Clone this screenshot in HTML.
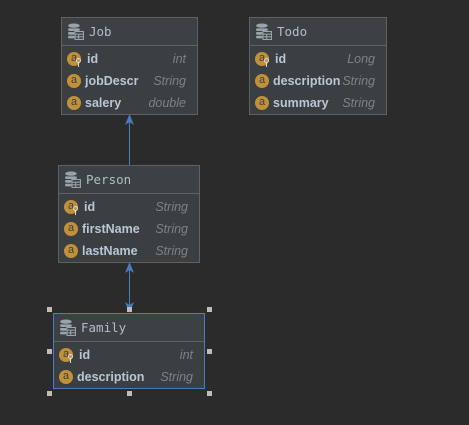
<!DOCTYPE html>
<html><head><style>
body{margin:0;width:469px;height:425px;background:#2b2b2b;position:relative;overflow:hidden;font-family:"Liberation Sans",sans-serif}
.b{position:absolute;background:#3c3f41;border:1px solid #5f6263;box-sizing:border-box}
.h{height:28px;border-bottom:1px solid #5f6263;background:#3e4143;display:flex;align-items:center;padding-left:5px;box-sizing:border-box}
.h span{font-family:"DejaVu Sans Mono","Liberation Mono",monospace;font-size:12.5px;color:#b0bccb;margin-left:5px}
.rows{padding-top:2px}
.r{height:22px;display:flex;align-items:center;padding:0 11px 0 5px;position:relative}
.c{display:block;width:14px;min-width:14px;height:14px;border-radius:50%;background:#c0913a;color:#3c3f41;font-size:11px;line-height:13px;text-align:center;flex:none}
.k{position:absolute;left:14px;top:10px;width:5px;height:5px;border:1.5px solid #d9dee4;border-radius:50%;box-sizing:border-box}
.k:after{content:"";position:absolute;left:0.5px;top:3px;width:1.5px;height:5px;background:#d9dee4}
.n{font-weight:bold;font-size:12.5px;color:#b9c6d6;margin-left:4px}
.key .n{margin-left:6px}
.t{margin-left:auto;font-style:italic;font-size:12.5px;color:#7f8285}
.hd{position:absolute;width:5px;height:5px;background:#bdbdbd}
</style></head><body>
<svg width="469" height="425" style="position:absolute;left:0;top:0">
<g stroke="#4a7cc0" stroke-width="1" fill="#4a7cc0">
<line x1="129.5" y1="118" x2="129.5" y2="165"/>
<path d="M129.5 114 L125 125 L129.5 122 L134 125Z" stroke="none"/>
<line x1="129.5" y1="266" x2="129.5" y2="310"/>
<path d="M129.5 262 L125 273 L129.5 270 L134 273Z" stroke="none"/>
<path d="M129.5 313 L125 302 L129.5 305 L134 302Z" stroke="none"/>
</g></svg>
<svg width="0" height="0" style="position:absolute"><defs><symbol id="tb" viewBox="0 0 16 16">
<ellipse cx="6.5" cy="2.5" rx="5.5" ry="2" fill="#9aa3ab"/><rect x="1" y="5" width="11" height="2.5" rx="1" fill="#9aa3ab"/><rect x="1" y="8.5" width="6" height="2.5" rx="1" fill="#9aa3ab"/><rect x="1" y="12" width="6" height="2.5" rx="1" fill="#9aa3ab"/>
<rect x="7.5" y="8" width="8" height="7.5" fill="none" stroke="#9aa3ab"/><line x1="7.5" y1="10.5" x2="15.5" y2="10.5" stroke="#9aa3ab"/><line x1="7.5" y1="13" x2="15.5" y2="13" stroke="#9aa3ab"/><line x1="11" y1="10.5" x2="11" y2="15.5" stroke="#9aa3ab"/>
</symbol></defs></svg>

<div class="b" style="left:61px;top:17px;width:137px;height:98px">
<div class="h"><svg width="17" height="17"><use href="#tb"/></svg><span>Job</span></div>
<div class="rows">
<div class="r key"><div class="c">a</div><i class="k"></i><span class="n">id</span><span class="t">int</span></div>
<div class="r"><div class="c">a</div><span class="n">jobDescr</span><span class="t">String</span></div>
<div class="r"><div class="c">a</div><span class="n">salery</span><span class="t">double</span></div>
</div></div>

<div class="b" style="left:249px;top:17px;width:138px;height:98px">
<div class="h"><svg width="17" height="17"><use href="#tb"/></svg><span>Todo</span></div>
<div class="rows">
<div class="r key"><div class="c">a</div><i class="k"></i><span class="n">id</span><span class="t">Long</span></div>
<div class="r"><div class="c">a</div><span class="n">description</span><span class="t">String</span></div>
<div class="r"><div class="c">a</div><span class="n">summary</span><span class="t">String</span></div>
</div></div>

<div class="b" style="left:58px;top:165px;width:142px;height:98px">
<div class="h"><svg width="17" height="17"><use href="#tb"/></svg><span>Person</span></div>
<div class="rows">
<div class="r key"><div class="c">a</div><i class="k"></i><span class="n">id</span><span class="t">String</span></div>
<div class="r"><div class="c">a</div><span class="n">firstName</span><span class="t">String</span></div>
<div class="r"><div class="c">a</div><span class="n">lastName</span><span class="t">String</span></div>
</div></div>

<div class="b" style="left:53px;top:313px;width:152px;height:76px;border-color:#4a7cc0">
<div class="h"><svg width="17" height="17"><use href="#tb"/></svg><span>Family</span></div>
<div class="rows">
<div class="r key"><div class="c">a</div><i class="k"></i><span class="n">id</span><span class="t">int</span></div>
<div class="r"><div class="c">a</div><span class="n">description</span><span class="t">String</span></div>
</div></div>

<div class="hd" style="left:47px;top:307px"></div>
<div class="hd" style="left:127px;top:307px"></div>
<div class="hd" style="left:207px;top:307px"></div>
<div class="hd" style="left:47px;top:349px"></div>
<div class="hd" style="left:207px;top:349px"></div>
<div class="hd" style="left:47px;top:391px"></div>
<div class="hd" style="left:127px;top:391px"></div>
<div class="hd" style="left:207px;top:391px"></div>
</body></html>
